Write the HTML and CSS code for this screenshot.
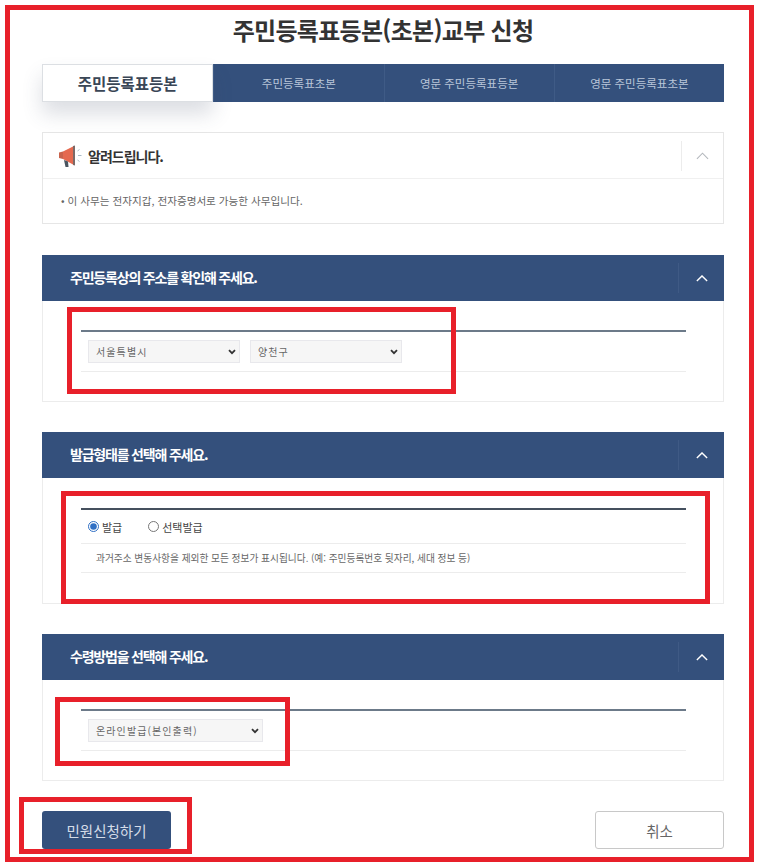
FILE: index.html
```html
<!DOCTYPE html>
<html lang="ko">
<head>
    <meta charset="UTF-8">
    <meta name="viewport" content="width=device-width, initial-scale=1.0">
    <title>주민등록표등본(초본)교부 신청</title>
    <link rel="stylesheet" href="styles.css">
</head>
<body>
    <div class="page">
        <h1 class="page-title">주민등록표등본(초본)교부 신청</h1>

        <div class="tabs">
            <button class="tab active">주민등록표등본</button>
            <button class="tab">주민등록표초본</button>
            <button class="tab">영문 주민등록표등본</button>
            <button class="tab">영문 주민등록표초본</button>
        </div>

        <div class="notice">
            <div class="notice-head">
                <svg class="notice-icon" viewBox="0 0 26 24" width="26" height="24">
                    <path d="M1 8.5 L5 7.5 V15 L1 14 Z" fill="#c9634c"/>
                    <path d="M5 7.5 L15 2.5 V20.5 L5 15 Z" fill="#e5694f"/>
                    <path d="M15 2 L17 1.5 V21.5 L15 21 Z" fill="#7b6a68"/>
                    <path d="M6 16 L10 17.5 L10.5 23 H7.5 Z" fill="#4a5560"/>
                    <path d="M19.5 7 L21.5 5.5 M20 11.5 H23.5 M19.5 16 L21.5 17.5" stroke="#a9bbc8" stroke-width="1" fill="none"/>
                </svg>
                <span class="notice-title">알려드립니다.</span>
                <span class="toggle toggle-light">
                    <svg viewBox="0 0 14 8" width="13" height="8"><path d="M1 7 L7 1 L13 7" fill="none" stroke="#b4b8bd" stroke-width="1.2"/></svg>
                </span>
            </div>
            <div class="notice-body">• 이 사무는 전자지갑, 전자증명서로 가능한 사무입니다.</div>
        </div>

        <section class="panel">
            <div class="panel-head">
                <span class="panel-title">주민등록상의 주소를 확인해 주세요.</span>
                <span class="toggle">
                    <svg viewBox="0 0 14 8" width="12" height="7"><path d="M1 7 L7 1 L13 7" fill="none" stroke="#fff" stroke-width="1.6"/></svg>
                </span>
            </div>
            <div class="panel-body">
                <div class="field-table">
                    <div class="field-row select-row">
                        <select class="field-select"><option>서울특별시</option></select>
                        <select class="field-select"><option>양천구</option></select>
                    </div>
                </div>
            </div>
        </section>

        <section class="panel">
            <div class="panel-head">
                <span class="panel-title">발급형태를 선택해 주세요.</span>
                <span class="toggle">
                    <svg viewBox="0 0 14 8" width="12" height="7"><path d="M1 7 L7 1 L13 7" fill="none" stroke="#fff" stroke-width="1.6"/></svg>
                </span>
            </div>
            <div class="panel-body body-tall">
                <div class="field-table dark-rule">
                    <div class="field-row radio-row">
                        <label class="radio-item"><input type="radio" name="kind" checked>발급</label>
                        <label class="radio-item"><input type="radio" name="kind">선택발급</label>
                    </div>
                    <div class="field-row desc-row">과거주소 변동사항을 제외한 모든 정보가 표시됩니다. (예: 주민등록번호 뒷자리, 세대 정보 등)</div>
                </div>
            </div>
        </section>

        <section class="panel">
            <div class="panel-head">
                <span class="panel-title">수령방법을 선택해 주세요.</span>
                <span class="toggle">
                    <svg viewBox="0 0 14 8" width="12" height="7"><path d="M1 7 L7 1 L13 7" fill="none" stroke="#fff" stroke-width="1.6"/></svg>
                </span>
            </div>
            <div class="panel-body">
                <div class="field-table">
                    <div class="field-row select-row">
                        <select class="field-select wide"><option>온라인발급(본인출력)</option></select>
                    </div>
                </div>
            </div>
        </section>

        <div class="actions">
            <button class="submit-btn">민원신청하기</button>
            <button class="cancel-btn">취소</button>
        </div>

        <!-- red annotation boxes drawn over the capture -->
        <div class="mark mark-address"></div>
        <div class="mark mark-kind"></div>
        <div class="mark mark-receive"></div>
        <div class="mark mark-submit"></div>
    </div>
</body>
</html>
```

FILE: styles.css
```css
* {
    box-sizing: border-box;
}
body {
    margin: 0;
    background-color: #fff;
    font-family: "Noto Sans CJK KR", "Noto Sans", sans-serif;
    color: #333;
}
.page {
    position: relative;
    width: 749px;
    height: 857px;
    margin: 5px 0 0 5px;
    padding: 0 25px 0 32px;
    border: 5px solid #e8202a;
}
.page-title {
    margin: 0;
    height: 54px;
    font-size: 24px;
    font-weight: 700;
    line-height: 39px;
    text-align: center;
    letter-spacing: -0.7px;
    color: #333;
}
.tabs {
    display: flex;
    height: 38px;
    background-color: #34507c;
}
.tab {
    flex: 1;
    padding: 0;
    border: none;
    border-left: 1px solid #3f5b86;
    background: none;
    font-family: inherit;
    font-size: 11.5px;
    color: #b9c6d9;
}
.tab.active {
    border: 1px solid #dcdfe3;
    background-color: #fff;
    box-shadow: 0 12px 20px rgba(60, 70, 100, 0.18);
    font-size: 15.5px;
    font-weight: 700;
    color: #3a4656;
}
.notice {
    margin-top: 30px;
    height: 92px;
    border: 1px solid #e6e6e6;
}
.notice-head {
    display: flex;
    align-items: center;
    height: 46px;
    padding-left: 15px;
    border-bottom: 1px solid #f0f0f0;
}
.notice-icon {
    flex: none;
}
.notice-title {
    margin-left: 4px;
    font-size: 14px;
    font-weight: 700;
    letter-spacing: -1px;
}
.toggle {
    display: flex;
    justify-content: center;
    align-items: center;
    width: 46px;
    height: 30px;
    margin-left: auto;
    border-left: 1px solid #3f5a85;
}
.toggle-light {
    width: 42px;
    border-left-color: #ececec;
}
.notice-body {
    padding: 14px 18px;
    font-size: 10.6px;
    line-height: 16px;
    color: #666;
}
.panel {
    margin-top: 30px;
    border: 1px solid #ececec;
    border-top: none;
}
.notice + .panel {
    margin-top: 31px;
}
.panel-head {
    display: flex;
    align-items: center;
    height: 46px;
    margin: 0 -1px;
    padding-left: 28px;
    background-color: #34507c;
}
.panel-title {
    margin-bottom: 2px;
    font-size: 14px;
    font-weight: 700;
    letter-spacing: -1.2px;
    color: #fff;
}
.panel-body {
    height: 100px;
    padding: 29px 37px 0 38px;
}
.body-tall {
    height: 125px;
    padding-top: 30px;
}
.field-table {
    border-top: 2px solid #6c7a89;
}
.dark-rule {
    border-top-color: #45505e;
}
.field-row {
    border-bottom: 1px solid #ececec;
}
.select-row {
    display: flex;
    gap: 10px;
    height: 40px;
    padding: 8px 0 0 7px;
}
.field-select {
    width: 152px;
    height: 23px;
    padding: 0 3px 0 7px;
    border: 1px solid #e8e8ec;
    border-radius: 0;
    appearance: none;
    background: #f6f6f6 url("data:image/svg+xml,%3Csvg xmlns='http://www.w3.org/2000/svg' width='8' height='6' viewBox='0 0 8 6'%3E%3Cpath d='M1 1.2 L4 4.2 L7 1.2' fill='none' stroke='%23333' stroke-width='1.8'/%3E%3C/svg%3E") no-repeat right 3px center;
    font-family: inherit;
    font-size: 10px;
    letter-spacing: 1.1px;
    color: #666;
}
.field-select.wide {
    width: 175px;
}
.radio-row {
    display: flex;
    align-items: center;
    gap: 26px;
    height: 34px;
    padding-left: 7px;
}
.radio-item {
    display: flex;
    align-items: center;
    font-size: 11px;
    color: #444;
}
.radio-item input {
    width: 11px;
    height: 11px;
    margin: 0 3px 0 0;
    accent-color: #2f6fc4;
}
.desc-row {
    height: 29px;
    padding-left: 15px;
    font-size: 9.7px;
    line-height: 28px;
    color: #666;
}
.actions {
    display: flex;
    justify-content: space-between;
    margin-top: 30px;
}
.submit-btn,
.cancel-btn {
    width: 129px;
    height: 38px;
    border-radius: 3px;
    font-family: inherit;
    font-size: 14.5px;
}
.submit-btn {
    border: none;
    background-color: #34507c;
    color: #d5dce8;
}
.cancel-btn {
    border: 1px solid #c8c8c8;
    background-color: #fff;
    color: #666;
}
.mark {
    position: absolute;
    border: 5px solid #e8202a;
}
.mark-address {
    left: 57px;
    top: 297px;
    width: 389px;
    height: 87px;
}
.mark-kind {
    left: 51px;
    top: 481px;
    width: 649px;
    height: 113px;
}
.mark-receive {
    left: 45px;
    top: 687px;
    width: 235px;
    height: 69px;
}
.mark-submit {
    left: 9px;
    top: 787px;
    width: 173px;
    height: 57px;
}
```
